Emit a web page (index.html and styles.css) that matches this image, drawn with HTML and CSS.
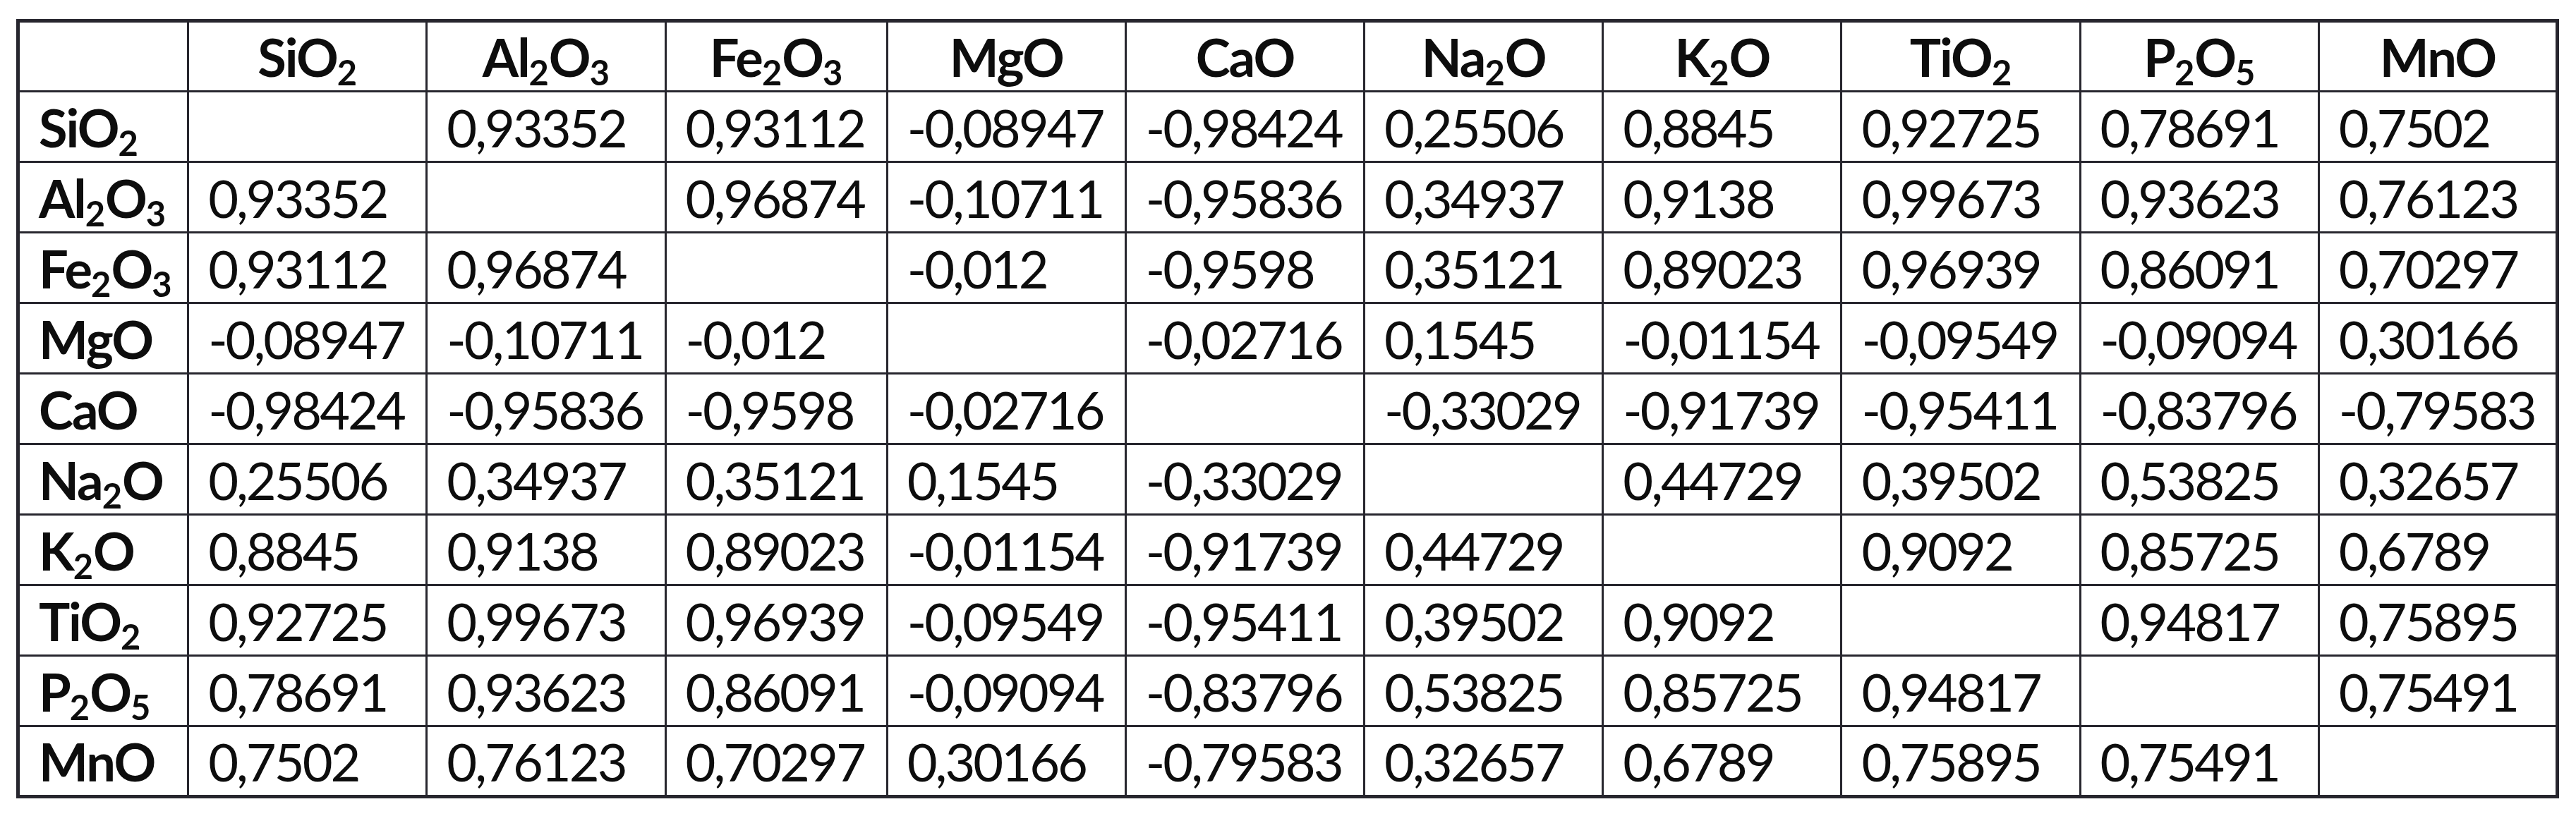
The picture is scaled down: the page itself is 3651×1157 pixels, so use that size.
FILE: index.html
```html
<!DOCTYPE html>
<html lang="pt">
<head>
<meta charset="utf-8">
<title>Correlation matrix</title>
<link rel="stylesheet" href="styles.css">
</head>
<body>
<div class="page">
<table class="matrix">
<colgroup>
<col class="c-label"><col class="c-std"><col class="c-std"><col class="c-narrow"><col class="c-std"><col class="c-std"><col class="c-std"><col class="c-std"><col class="c-std"><col class="c-std"><col class="c-std">
</colgroup>
<thead>
<tr>
<th></th>
<th>SiO<sub>2</sub></th>
<th>Al<sub>2</sub>O<sub>3</sub></th>
<th>Fe<sub>2</sub>O<sub>3</sub></th>
<th>MgO</th>
<th>CaO</th>
<th>Na<sub>2</sub>O</th>
<th>K<sub>2</sub>O</th>
<th>TiO<sub>2</sub></th>
<th>P<sub>2</sub>O<sub>5</sub></th>
<th>MnO</th>
</tr>
</thead>
<tbody>
<tr><th>SiO<sub>2</sub></th><td></td><td>0,93352</td><td>0,93112</td><td>-0,08947</td><td>-0,98424</td><td>0,25506</td><td>0,8845</td><td>0,92725</td><td>0,78691</td><td>0,7502</td></tr>
<tr><th>Al<sub>2</sub>O<sub>3</sub></th><td>0,93352</td><td></td><td>0,96874</td><td>-0,10711</td><td>-0,95836</td><td>0,34937</td><td>0,9138</td><td>0,99673</td><td>0,93623</td><td>0,76123</td></tr>
<tr><th>Fe<sub>2</sub>O<sub>3</sub></th><td>0,93112</td><td>0,96874</td><td></td><td>-0,012</td><td>-0,9598</td><td>0,35121</td><td>0,89023</td><td>0,96939</td><td>0,86091</td><td>0,70297</td></tr>
<tr><th>MgO</th><td>-0,08947</td><td>-0,10711</td><td>-0,012</td><td></td><td>-0,02716</td><td>0,1545</td><td>-0,01154</td><td>-0,09549</td><td>-0,09094</td><td>0,30166</td></tr>
<tr><th>CaO</th><td>-0,98424</td><td>-0,95836</td><td>-0,9598</td><td>-0,02716</td><td></td><td>-0,33029</td><td>-0,91739</td><td>-0,95411</td><td>-0,83796</td><td>-0,79583</td></tr>
<tr><th>Na<sub>2</sub>O</th><td>0,25506</td><td>0,34937</td><td>0,35121</td><td>0,1545</td><td>-0,33029</td><td></td><td>0,44729</td><td>0,39502</td><td>0,53825</td><td>0,32657</td></tr>
<tr><th>K<sub>2</sub>O</th><td>0,8845</td><td>0,9138</td><td>0,89023</td><td>-0,01154</td><td>-0,91739</td><td>0,44729</td><td></td><td>0,9092</td><td>0,85725</td><td>0,6789</td></tr>
<tr><th>TiO<sub>2</sub></th><td>0,92725</td><td>0,99673</td><td>0,96939</td><td>-0,09549</td><td>-0,95411</td><td>0,39502</td><td>0,9092</td><td></td><td>0,94817</td><td>0,75895</td></tr>
<tr><th>P<sub>2</sub>O<sub>5</sub></th><td>0,78691</td><td>0,93623</td><td>0,86091</td><td>-0,09094</td><td>-0,83796</td><td>0,53825</td><td>0,85725</td><td>0,94817</td><td></td><td>0,75491</td></tr>
<tr><th>MnO</th><td>0,7502</td><td>0,76123</td><td>0,70297</td><td>0,30166</td><td>-0,79583</td><td>0,32657</td><td>0,6789</td><td>0,75895</td><td>0,75491</td><td></td></tr>
</tbody>
</table>
</div>
</body>
</html>
```

FILE: styles.css
```css
html, body {
  margin: 0;
  padding: 0;
  background: #ffffff;
}

.page {
  padding: 27px 0 0 23px;
}

.matrix {
  border-collapse: collapse;
  table-layout: fixed;
  width: 3604px;
  border: 5px solid #27262e;
  font-family: "Lato", "Open Sans", sans-serif;
  font-size: 74px;
  color: #0d0d0d;
}

.c-label { width: 241px; }
.c-std { width: 338px; }
.c-narrow { width: 314px; }

.matrix th,
.matrix td {
  border: 3px solid #27262e;
  height: 100px;
  box-sizing: border-box;
  padding: 0 0 10px 27px;
  line-height: 1;
  vertical-align: bottom;
  text-align: left;
  white-space: nowrap;
  font-weight: 400;
  letter-spacing: -3px;
}

.matrix thead th {
  text-align: center;
  padding-left: 0;
  font-weight: 700;
  letter-spacing: -2px;
}

.matrix tbody th {
  font-weight: 700;
  letter-spacing: -2px;
}

.matrix sub {
  font-size: 0.66em;
  line-height: 0;
  vertical-align: -12px;
  letter-spacing: 0;
}
```
